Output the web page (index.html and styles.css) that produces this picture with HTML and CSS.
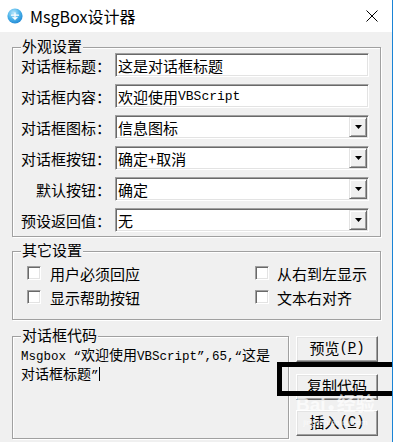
FILE: index.html
```html
<!DOCTYPE html>
<html lang="zh-CN">
<head>
<meta charset="utf-8">
<title>MsgBox设计器</title>
<link rel="stylesheet" href="styles.css">
</head>
<body>
<div class="window">
  <header class="titlebar">
    <svg class="app-icon" viewBox="0 0 16 16">
      <defs>
        <radialGradient id="ig" cx="0.4" cy="0.3" r="0.8">
          <stop offset="0" stop-color="#b5e6fb"/>
          <stop offset="0.5" stop-color="#4bb3ea"/>
          <stop offset="1" stop-color="#1a7fcf"/>
        </radialGradient>
      </defs>
      <circle cx="8" cy="8" r="7.6" fill="url(#ig)"/>
      <path d="M4.5 7.2h7M8 5v6.5M6 9.5l2 1.5 2-1.5" stroke="#fff" stroke-width="1.3" fill="none" stroke-linecap="round"/>
    </svg>
    <span class="title">MsgBox设计器</span>
    <svg class="close" viewBox="0 0 12 12">
      <path d="M0.5 0.5L11.5 11.5M11.5 0.5L0.5 11.5" stroke="#000" stroke-width="1"/>
    </svg>
  </header>

  <main class="client">
    <section class="group appearance">
      <div class="group-title">外观设置</div>
      <div class="form">
        <div class="form-label">对话框标题：</div>
        <div class="edit">这是对话框标题</div>
        <div class="form-label">对话框内容：</div>
        <div class="edit">欢迎使用<span class="mono">VBScript</span></div>
        <div class="form-label">对话框图标：</div>
        <div class="edit combo"><span>信息图标</span><span class="drop"><svg class="arrow" viewBox="0 0 7 4"><path d="M0 0h7L3.5 4z" fill="#000"/></svg></span></div>
        <div class="form-label">对话框按钮：</div>
        <div class="edit combo"><span>确定+取消</span><span class="drop"><svg class="arrow" viewBox="0 0 7 4"><path d="M0 0h7L3.5 4z" fill="#000"/></svg></span></div>
        <div class="form-label">默认按钮：</div>
        <div class="edit combo"><span>确定</span><span class="drop"><svg class="arrow" viewBox="0 0 7 4"><path d="M0 0h7L3.5 4z" fill="#000"/></svg></span></div>
        <div class="form-label">预设返回值：</div>
        <div class="edit combo"><span>无</span><span class="drop"><svg class="arrow" viewBox="0 0 7 4"><path d="M0 0h7L3.5 4z" fill="#000"/></svg></span></div>
      </div>
    </section>

    <section class="group other">
      <div class="group-title">其它设置</div>
      <div class="checks">
        <div class="check"><span class="box"></span>用户必须回应</div>
        <div class="check right"><span class="box"></span>从右到左显示</div>
        <div class="check"><span class="box"></span>显示帮助按钮</div>
        <div class="check right"><span class="box"></span>文本右对齐</div>
      </div>
    </section>

    <div class="bottom">
      <section class="group code-group">
        <div class="group-title">对话框代码</div>
        <div class="code"><span class="mono">Msgbox “</span>欢迎使用<span class="mono">VBScript”,65,“</span>这是<br>对话框标题<span class="mono">”</span><span class="caret"></span></div>
      </section>
      <div class="buttons">
        <div class="btn">预览<span class="mono">(<u>P</u>)</span></div>
        <div class="btn btn-copy">复制代码</div>
        <div class="btn btn-insert">插入<span class="mono">(<u>C</u>)</span></div>
      </div>
    </div>
  </main>

  <div class="annot"></div>
  <div class="wm"><span class="wm-main">Bai<span class="paw">●</span>经验</span><span class="wm-sub">jingyan.baidu.com</span></div>
</div>
</body>
</html>
```

FILE: styles.css
```css
* { box-sizing: border-box; }
html, body { margin: 0; padding: 0; }
body {
  width: 393px;
  height: 442px;
  overflow: hidden;
  background: #f0f0f0;
  font-family: "Noto Sans CJK SC", "Microsoft YaHei", sans-serif;
  color: #000;
}
.window {
  position: relative;
  width: 393px;
  height: 442px;
  border-right: 1px solid #1a84d6;
  background: #f0f0f0;
  overflow: hidden;
}
.titlebar {
  height: 32px;
  background: #fff;
  display: flex;
  align-items: center;
  padding-left: 7px;
}
.app-icon { width: 16px; height: 16px; flex: none; }
.title { margin-left: 7px; font-size: 16px; line-height: 20px; }
.close { margin-left: auto; margin-right: 14px; width: 12px; height: 12px; }

.client { padding: 15px 11px 0 12px; }

.group {
  border: 1px solid #a0a0a0;
  box-shadow: 1px 1px 0 #fff, inset 1px 1px 0 #fff;
}
.group-title {
  width: max-content;
  background: #f0f0f0;
  font-size: 15px;
  line-height: 18px;
  padding: 0 1px;
  margin-top: -11px;
}

.appearance { width: 369px; padding: 0 11px 3px 8px; }
.appearance .group-title { margin-bottom: -2px; }

.form {
  display: grid;
  grid-template-columns: 90px 254px;
  column-gap: 4px;
  row-gap: 6px;
}
.form-label {
  font-size: 15px;
  line-height: 24px;
  padding-top: 1px;
  text-align: right;
  white-space: nowrap;
}
.edit {
  height: 24px;
  background: #fff;
  border: 1px solid;
  border-color: #a0a0a0 #fff #fff #a0a0a0;
  box-shadow: inset 1px 1px 0 #696969, inset -1px -1px 0 #e3e3e3;
  padding: 0 1px 0 2px;
  display: flex;
  align-items: center;
  font-size: 15px;
  white-space: nowrap;
}
.mono { font-family: "Liberation Mono", monospace; font-size: 13px; }
.combo { justify-content: space-between; }
.drop {
  width: 18px;
  height: 20px;
  background: #f0f0f0;
  border: 1px solid;
  border-color: #e3e3e3 #696969 #696969 #e3e3e3;
  box-shadow: inset 1px 1px 0 #fff, inset -1px -1px 0 #a0a0a0;
  display: flex;
  align-items: center;
  justify-content: center;
}
.arrow { width: 7px; height: 4px; }

.other { width: 369px; margin-top: 14px; padding: 0 11px 10px 14px; }
.other .group-title { margin-left: -6px; margin-bottom: 2px; }
.checks {
  display: grid;
  grid-template-columns: 228px auto;
  grid-auto-rows: 24px;
}
.check {
  display: flex;
  align-items: center;
  gap: 9px;
  font-size: 15px;
  white-space: nowrap;
}
.check.right { gap: 8px; }
.box {
  width: 14px;
  height: 14px;
  flex: none;
  background: #fff;
  border: 1px solid;
  border-color: #a0a0a0 #fff #fff #a0a0a0;
  box-shadow: inset 1px 1px 0 #696969, inset -1px -1px 0 #e3e3e3;
}

.bottom { display: flex; margin-top: 16px; }
.code-group { width: 277px; height: 103px; padding: 0 8px; }
.code-group .group-title { margin-bottom: 2px; }
.code {
  font-size: 14px;
  line-height: 16px;
  white-space: nowrap;
}
.code .mono { font-size: 12.5px; }
.caret {
  display: inline-block;
  width: 1px;
  height: 14px;
  background: #000;
  vertical-align: -2px;
}
.buttons {
  display: flex;
  flex-direction: column;
  margin-left: 7px;
}
.btn {
  width: 82px;
  height: 26px;
  padding-bottom: 3px;
  background: #f0f0f0;
  border: 1px solid;
  border-color: #fff #696969 #696969 #fff;
  box-shadow: inset -1px -1px 0 #a0a0a0, inset 1px 1px 0 #e3e3e3;
  display: flex;
  align-items: center;
  justify-content: center;
  font-size: 15px;
  white-space: nowrap;
}
.btn .mono { font-size: 14px; }
.btn-copy { margin-top: 12px; }
.btn-insert { margin-top: 10px; }

.annot {
  position: absolute;
  left: 277px;
  top: 362px;
  width: 130px;
  height: 34px;
  border: 5px solid #000;
}
.wm {
  position: absolute;
  left: 296px;
  top: 394px;
  display: flex;
  flex-direction: column;
  align-items: center;
  color: rgba(255, 255, 255, 0.7);
  pointer-events: none;
}
.wm-main { font-family: "Liberation Sans", "Noto Sans CJK SC", sans-serif; font-weight: bold; font-size: 19px; line-height: 22px; }
.paw { font-size: 12px; margin: 0 2px; }
.wm-sub { font-family: "Liberation Sans", sans-serif; font-size: 8px; line-height: 9px; }
```
